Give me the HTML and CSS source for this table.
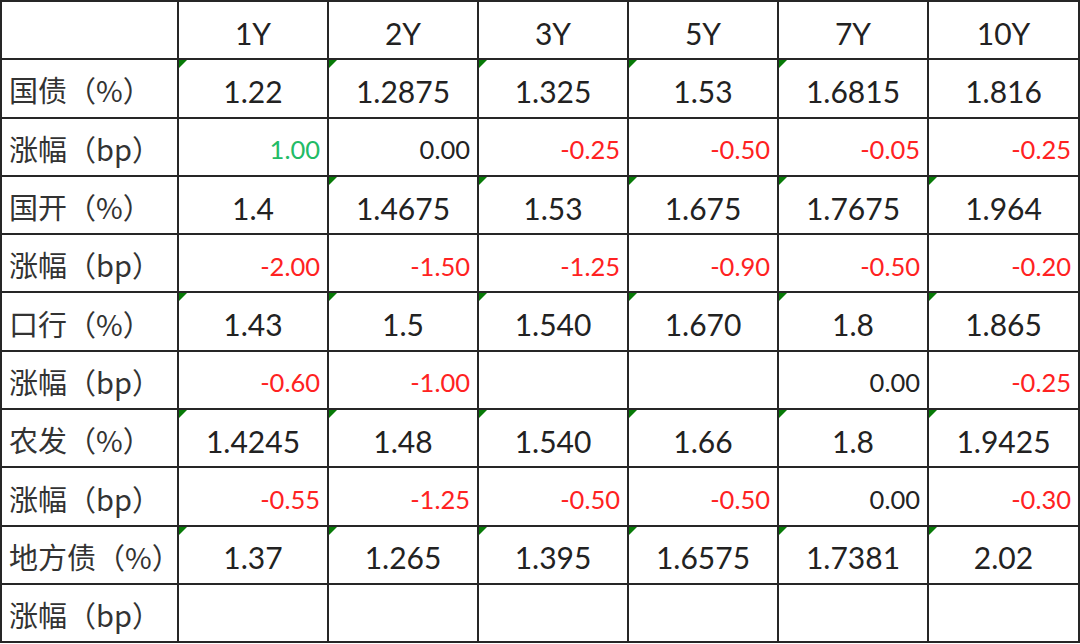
FILE: index.html
```html
<!DOCTYPE html>
<html lang="zh-CN">
<head>
    <meta charset="UTF-8">
    <meta name="viewport" content="width=device-width, initial-scale=1.0">
    <title>利率债收益率</title>
    <link rel="stylesheet" href="styles.css">
</head>
<body>
    <div class="sheet">
        <div class="cell label"></div>
        <div class="cell head">1Y</div>
        <div class="cell head">2Y</div>
        <div class="cell head">3Y</div>
        <div class="cell head">5Y</div>
        <div class="cell head">7Y</div>
        <div class="cell head">10Y</div>

        <div class="cell label">国债（%）</div>
        <div class="cell rate mark">1.22</div>
        <div class="cell rate mark">1.2875</div>
        <div class="cell rate mark">1.325</div>
        <div class="cell rate mark">1.53</div>
        <div class="cell rate mark">1.6815</div>
        <div class="cell rate">1.816</div>

        <div class="cell label">涨幅（bp）</div>
        <div class="cell bp up">1.00</div>
        <div class="cell bp">0.00</div>
        <div class="cell bp down">-0.25</div>
        <div class="cell bp down">-0.50</div>
        <div class="cell bp down">-0.05</div>
        <div class="cell bp down">-0.25</div>

        <div class="cell label">国开（%）</div>
        <div class="cell rate">1.4</div>
        <div class="cell rate mark">1.4675</div>
        <div class="cell rate mark">1.53</div>
        <div class="cell rate mark">1.675</div>
        <div class="cell rate mark">1.7675</div>
        <div class="cell rate mark">1.964</div>

        <div class="cell label">涨幅（bp）</div>
        <div class="cell bp down">-2.00</div>
        <div class="cell bp down">-1.50</div>
        <div class="cell bp down">-1.25</div>
        <div class="cell bp down">-0.90</div>
        <div class="cell bp down">-0.50</div>
        <div class="cell bp down">-0.20</div>

        <div class="cell label">口行（%）</div>
        <div class="cell rate mark">1.43</div>
        <div class="cell rate mark">1.5</div>
        <div class="cell rate mark">1.540</div>
        <div class="cell rate mark">1.670</div>
        <div class="cell rate mark">1.8</div>
        <div class="cell rate mark">1.865</div>

        <div class="cell label">涨幅（bp）</div>
        <div class="cell bp down">-0.60</div>
        <div class="cell bp down">-1.00</div>
        <div class="cell bp"></div>
        <div class="cell bp"></div>
        <div class="cell bp">0.00</div>
        <div class="cell bp down">-0.25</div>

        <div class="cell label">农发（%）</div>
        <div class="cell rate mark">1.4245</div>
        <div class="cell rate mark">1.48</div>
        <div class="cell rate mark">1.540</div>
        <div class="cell rate mark">1.66</div>
        <div class="cell rate mark">1.8</div>
        <div class="cell rate mark">1.9425</div>

        <div class="cell label">涨幅（bp）</div>
        <div class="cell bp down">-0.55</div>
        <div class="cell bp down">-1.25</div>
        <div class="cell bp down">-0.50</div>
        <div class="cell bp down">-0.50</div>
        <div class="cell bp">0.00</div>
        <div class="cell bp down">-0.30</div>

        <div class="cell label">地方债（%）</div>
        <div class="cell rate mark">1.37</div>
        <div class="cell rate mark">1.265</div>
        <div class="cell rate mark">1.395</div>
        <div class="cell rate mark">1.6575</div>
        <div class="cell rate mark">1.7381</div>
        <div class="cell rate mark">2.02</div>

        <div class="cell label">涨幅（bp）</div>
        <div class="cell bp"></div>
        <div class="cell bp"></div>
        <div class="cell bp"></div>
        <div class="cell bp"></div>
        <div class="cell bp"></div>
        <div class="cell bp"></div>
    </div>
</body>
</html>
```

FILE: styles.css
```css
* {
    margin: 0;
    padding: 0;
    box-sizing: border-box;
}

body {
    background: #fff;
    font-family: Lato, "Noto Sans CJK SC", sans-serif;
    color: #222;
}

.sheet {
    display: grid;
    grid-template-columns: 177px repeat(5, 150px) 1fr;
    grid-template-rows: repeat(11, 58.3px);
    width: 1080px;
    border-top: 2px solid #262626;
    border-left: 2px solid #262626;
}

.cell {
    position: relative;
    display: flex;
    align-items: center;
    border-right: 2px solid #262626;
    border-bottom: 2px solid #262626;
    padding-top: 5px;
    white-space: nowrap;
}

.label {
    padding-left: 7px;
    font-family: "Noto Sans CJK SC", sans-serif;
    font-size: 29px;
    color: #333;
    padding-top: 2px;
}

.head,
.rate {
    justify-content: center;
    font-size: 30px;
}

.bp {
    justify-content: flex-end;
    padding-right: 7px;
    font-size: 25.5px;
}

.up {
    color: #22bb66;
}

.down {
    color: #ff2222;
}

.mark::before {
    content: "";
    position: absolute;
    top: 0;
    left: 0;
    border-top: 8px solid #077a07;
    border-right: 8px solid transparent;
}
```
